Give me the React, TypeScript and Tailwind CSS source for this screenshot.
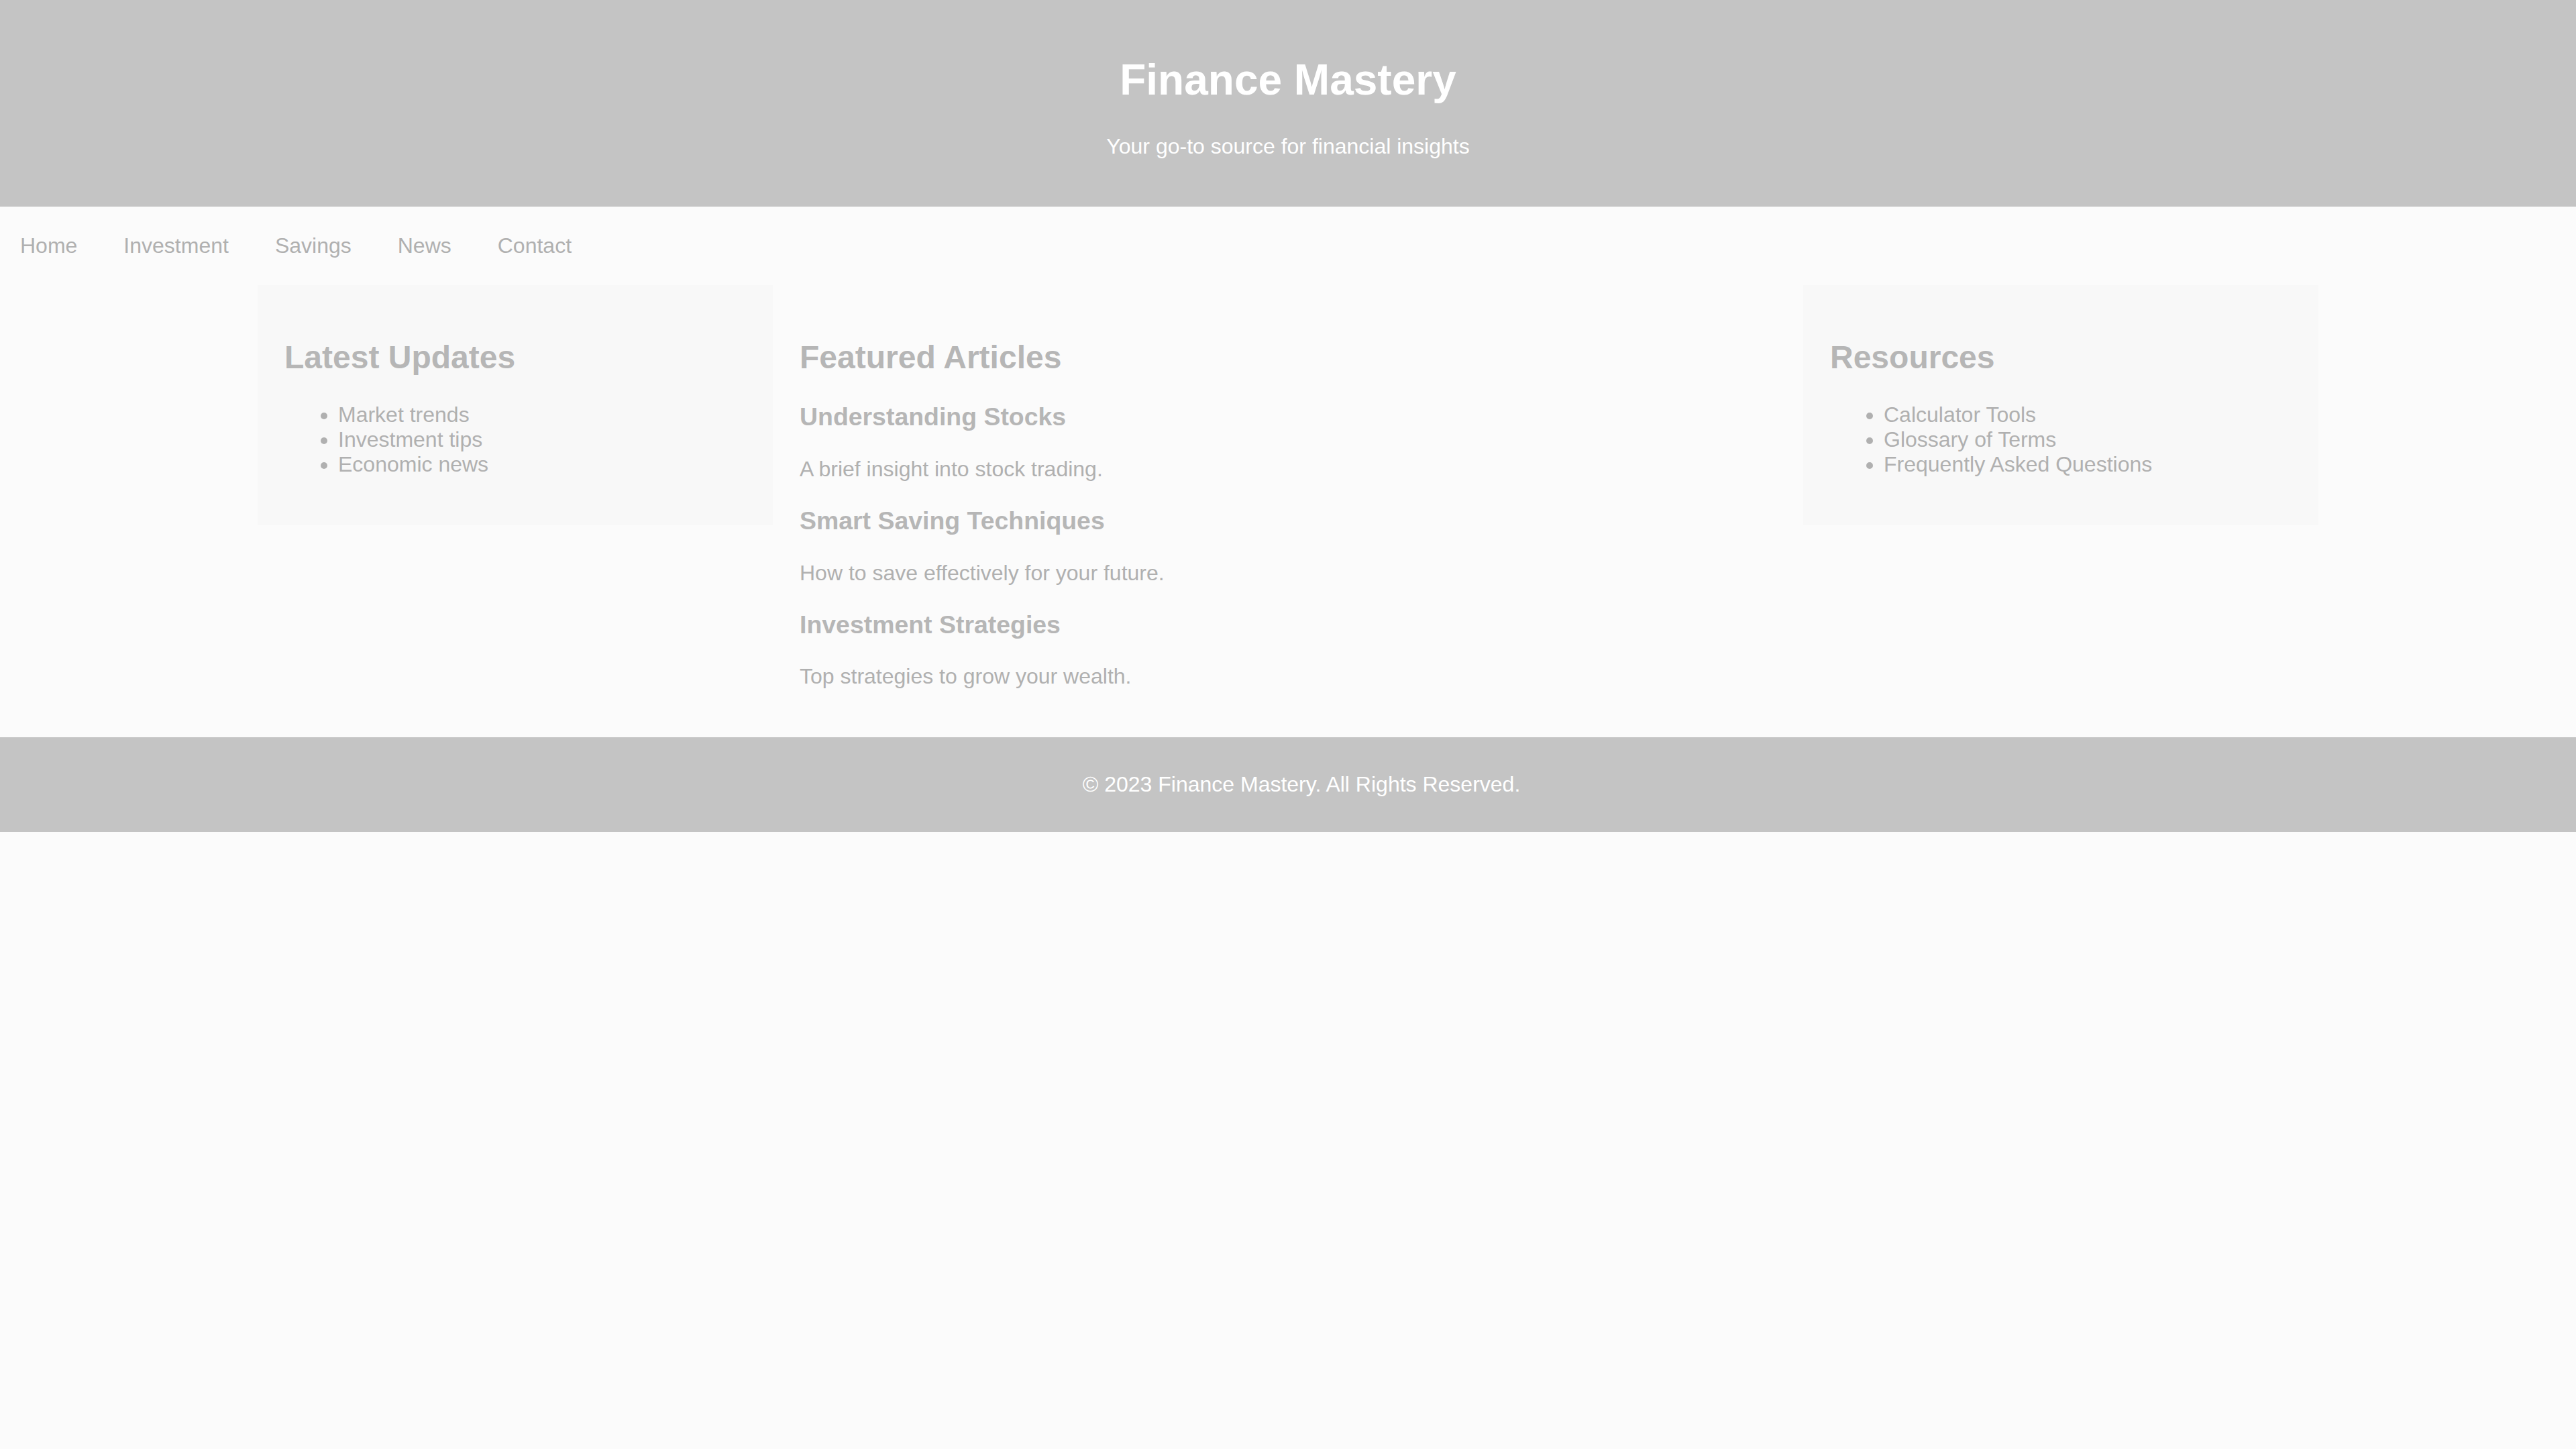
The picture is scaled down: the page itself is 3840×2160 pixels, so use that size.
import type { ReactNode } from "react";

const font = "font-['Liberation_Sans',Arial,sans-serif]";

function SideBox({ title, items }: { title: string; items: string[] }) {
  return (
    <aside className="w-1/4 shrink-0 bg-[#f8f8f8] p-[40px]">
      <h2 className="mt-[40px] mb-[40px] text-[48px] font-bold leading-[1.15] text-[#b6b6b6]">
        {title}
      </h2>
      <ul className="mt-[40px] mb-[32px] list-disc pl-[80px] text-[32px] leading-[1.15] text-[#b0b0b0]">
        {items.map((item) => (
          <li key={item}>{item}</li>
        ))}
      </ul>
    </aside>
  );
}

function Article({ title, children }: { title: string; children: ReactNode }) {
  return (
    <div>
      <h3 className="my-[37.44px] text-[37.44px] font-bold leading-[1.15] text-[#b6b6b6]">
        {title}
      </h3>
      <p className="my-[32px] text-[32px] leading-[1.15] text-[#b0b0b0]">{children}</p>
    </div>
  );
}

export default function App() {
  const links = ["Home", "Investment", "Savings", "News", "Contact"];

  return (
    <div className={`min-h-screen bg-[#fbfbfb] ${font}`}>
      {/* Header */}
      <header className="bg-[#c4c4c4] py-[40px] text-center text-white">
        <h1 className="mt-[43px] mb-[43px] text-[64px] font-bold leading-[1.15]">
          Finance Mastery
        </h1>
        <p className="mb-[32px] text-[32px] leading-[1.15]">
          Your go-to source for financial insights
        </p>
      </header>

      {/* Nav */}
      <nav className="flex gap-[9px] pt-[40px] pb-[40px]">
        {links.map((l) => (
          <a key={l} href="#" className="px-[30px] text-[32px] leading-[1.15] text-[#b0b0b0]">
            {l}
          </a>
        ))}
      </nav>

      {/* Main content */}
      <main className="mx-auto flex w-4/5 items-start">
        <SideBox
          title="Latest Updates"
          items={["Market trends", "Investment tips", "Economic news"]}
        />

        <article className="flex-1 p-[40px]">
          <h2 className="mt-[40px] mb-[40px] text-[48px] font-bold leading-[1.15] text-[#b6b6b6]">
            Featured Articles
          </h2>
          <Article title="Understanding Stocks">A brief insight into stock trading.</Article>
          <Article title="Smart Saving Techniques">How to save effectively for your future.</Article>
          <Article title="Investment Strategies">Top strategies to grow your wealth.</Article>
        </article>

        <SideBox
          title="Resources"
          items={["Calculator Tools", "Glossary of Terms", "Frequently Asked Questions"]}
        />
      </main>

      {/* Footer */}
      <footer className="bg-[#c4c4c4] py-[20px] pl-[40px] text-center text-white">
        <p className="my-[32px] text-[32px] leading-[1.15]">
          © 2023 Finance Mastery. All Rights Reserved.
        </p>
      </footer>
    </div>
  );
}
